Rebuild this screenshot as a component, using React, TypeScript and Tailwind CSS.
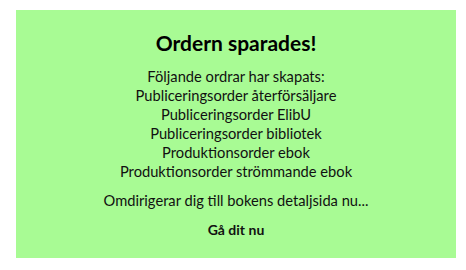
import React from "react";

const orders = [
  "Publiceringsorder återförsäljare",
  "Publiceringsorder ElibU",
  "Publiceringsorder bibliotek",
  "Produktionsorder ebok",
  "Produktionsorder strömmande ebok",
];

export default function App() {
  return (
    <div className="min-h-[270px] w-[466px] bg-white pl-4 pt-[10px] font-['Lato',sans-serif] text-[#111]">
      <div className="flex h-[248px] w-[440px] flex-col items-center bg-[#a8fb94] pt-[19px] text-center">
        <h1 className="text-[21px] font-bold leading-[28px] text-black">Ordern sparades!</h1>
        <div className="mt-[10px] text-[14.7px] leading-[19px]">
          <p>Följande ordrar har skapats:</p>
          {orders.map((o) => (
            <p key={o}>{o}</p>
          ))}
        </div>
        <p className="mt-[10px] text-[14.7px] leading-[19px]">Omdirigerar dig till bokens detaljsida nu...</p>
        <a className="mt-[10px] text-[14px] font-bold leading-[19px]">Gå dit nu</a>
      </div>
    </div>
  );
}
